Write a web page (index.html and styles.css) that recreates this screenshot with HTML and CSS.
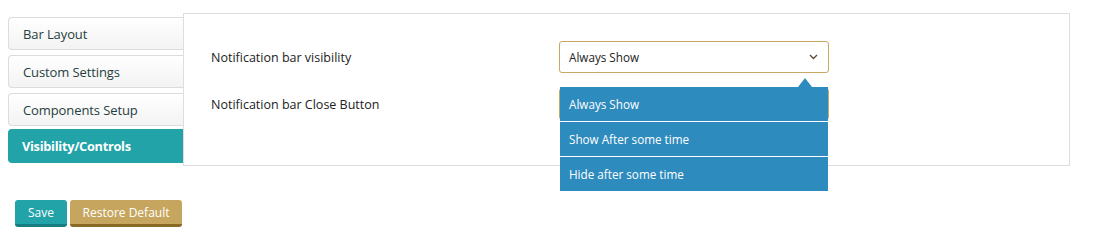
FILE: index.html
```html
<!DOCTYPE html>
<html>
<head>
<meta charset="utf-8">
<link rel="stylesheet" href="styles.css">
</head>
<body>
<div class="page">
  <div class="settings">
    <div class="tabs">
      <div class="tab">Bar Layout</div>
      <div class="tab">Custom Settings</div>
      <div class="tab">Components Setup</div>
      <div class="tab active">Visibility/Controls</div>
    </div>
    <div class="panel">
      <div class="row">
        <div class="label">Notification bar visibility</div>
        <div class="field">
          <div class="select">
            <span class="value">Always Show</span>
            <svg class="chev" width="9" height="6" viewBox="0 0 9 6"><polyline points="1,1 4.5,4.5 8,1" fill="none" stroke="#5a4f3c" stroke-width="1.4"/></svg>
          </div>
          <div class="dropdown">
            <div class="caret"></div>
            <div class="opt">Always Show</div>
            <div class="opt">Show After some time</div>
            <div class="opt">Hide after some time</div>
          </div>
        </div>
      </div>
      <div class="row">
        <div class="label">Notification bar Close Button</div>
        <div class="field">
          <div class="select"></div>
        </div>
      </div>
    </div>
  </div>
  <div class="actions">
    <button class="btn save">Save</button>
    <button class="btn restore">Restore Default</button>
  </div>
</div>
</body>
</html>
```

FILE: styles.css
```css
html, body {
  margin: 0;
  padding: 0;
  background: #fff;
  font-family: "Open Sans", "Noto Sans", sans-serif;
}
.page {
  padding-top: 13px;
}
.settings {
  display: flex;
  align-items: flex-start;
}
.tabs {
  margin-left: 8px;
  margin-top: 4px;
  width: 175px;
  display: flex;
  flex-direction: column;
}
.tab {
  box-sizing: border-box;
  height: 33px;
  margin-bottom: 5px;
  padding-left: 14px;
  display: flex;
  align-items: center;
  border: 1px solid #dcdcdc;
  border-right: none;
  border-radius: 4px 0 0 4px;
  background: linear-gradient(#ffffff, #f3f3f3);
  color: #263f40;
  font-size: 13px;
  font-weight: 500;
  letter-spacing: -0.1px;
}
.tab.active {
  margin-top: -2px;
  height: 34px;
  border: none;
  padding-left: 14px;
  background: #21a3a8;
  color: #fff;
  font-weight: 700;
  font-size: 12.8px;
  letter-spacing: -0.3px;
}
.panel {
  box-sizing: border-box;
  width: 887px;
  height: 153px;
  border: 1px solid #dedede;
  padding: 27px 0 0 27px;
  display: flex;
  flex-direction: column;
  gap: 15px;
}
.row {
  display: flex;
  align-items: center;
}
.label {
  width: 348px;
  font-size: 12.5px;
  color: #222;
}
.field {
  position: relative;
}
.select {
  box-sizing: border-box;
  width: 270px;
  height: 32px;
  border: 1px solid #c9a862;
  border-radius: 3px;
  padding: 0 9px;
  display: flex;
  align-items: center;
  justify-content: space-between;
  font-size: 11.7px;
  color: #222;
  background: #fff;
}
.chev {
  margin-right: 1px;
}
.dropdown {
  position: absolute;
  left: 1px;
  top: 46px;
  width: 268px;
  z-index: 2;
  display: flex;
  flex-direction: column;
  gap: 1px;
  background: #fff;
  border-radius: 3px 3px 0 0;
}
.caret {
  position: absolute;
  top: -9px;
  left: 238px;
  width: 0;
  height: 0;
  border-left: 7px solid transparent;
  border-right: 7px solid transparent;
  border-bottom: 9px solid #2e8bbe;
}
.opt {
  height: 34px;
  display: flex;
  align-items: center;
  padding-left: 9px;
  background: #2e8bbe;
  color: #fff;
  font-size: 11.7px;
}
.opt:first-of-type {
  border-radius: 3px 3px 0 0;
}
.actions {
  display: flex;
  gap: 3px;
  margin: 32px 0 0 15px;
}
.btn {
  box-sizing: border-box;
  height: 27px;
  border: none;
  border-bottom: 3px solid;
  border-radius: 3px;
  color: #fff;
  font-family: "Open Sans", "Noto Sans", sans-serif;
  font-size: 12px;
  padding: 0;
  white-space: nowrap;
  text-align: center;
}
.save {
  width: 52px;
  background: #21a3a8;
  border-bottom-color: #177d81;
}
.restore {
  width: 112px;
  background: #c6a65e;
  border-bottom-color: #8a6a22;
}
```
